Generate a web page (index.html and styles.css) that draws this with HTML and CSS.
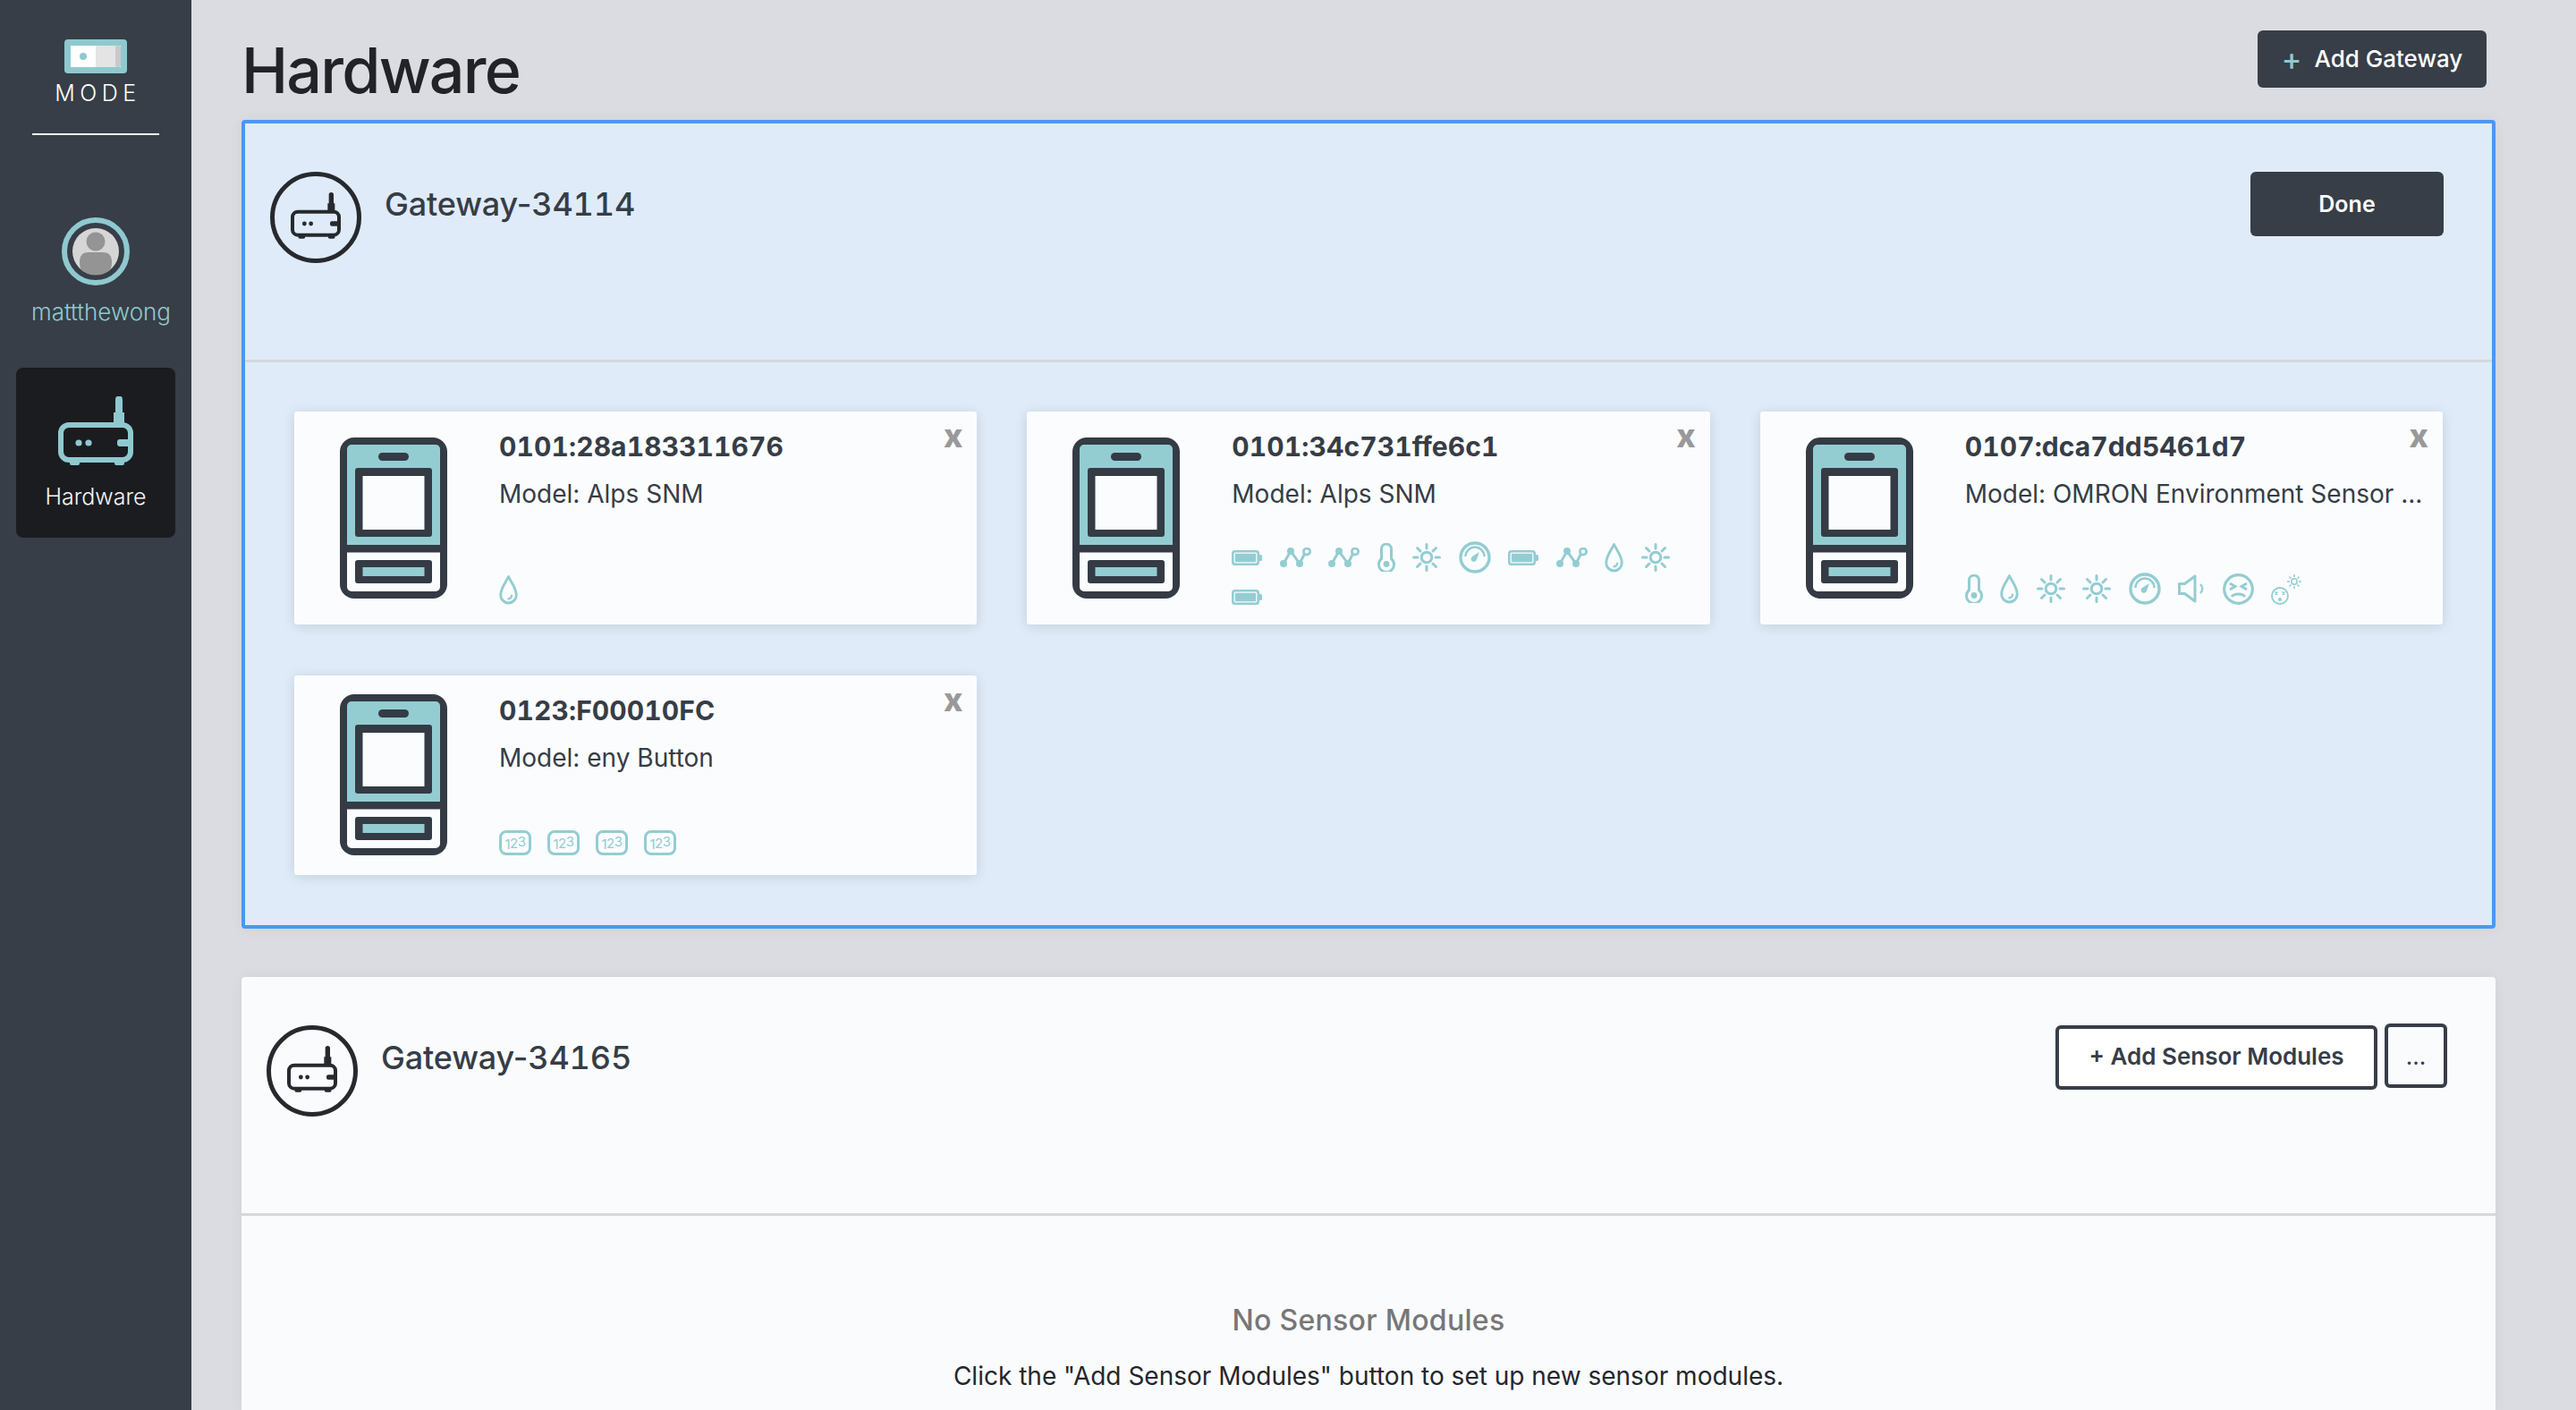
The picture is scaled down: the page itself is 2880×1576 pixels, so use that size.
FILE: index.html
```html
<!DOCTYPE html>
<html lang="en">
<head>
  <meta charset="UTF-8">
  <title>Hardware</title>
  <link rel="stylesheet" href="styles.css">
</head>
<body>
  <svg class="defs" width="0" height="0">
    <defs>
      <symbol id="i-router" viewBox="0 0 84 77">
        <rect x="3" y="32" width="78" height="39" rx="9" fill="none" stroke="currentColor" stroke-width="6"/>
        <path d="M64 3.500a4 4 0 0 1 8 0V18h2v14H62V18h2z" fill="currentColor"/>
        <rect x="13" y="70" width="11" height="7" rx="2" fill="currentColor"/>
        <rect x="63" y="70" width="11" height="7" rx="2" fill="currentColor"/>
        <circle cx="23" cy="52" r="3.600" fill="currentColor"/>
        <circle cx="34" cy="52" r="3.600" fill="currentColor"/>
        <rect x="66" y="48" width="16" height="8" rx="3" fill="currentColor"/>
      </symbol>
      <symbol id="i-device" viewBox="0 0 120 180">
        <rect width="120" height="180" rx="16" fill="#343b44"/>
        <path d="M13 8h94a5 5 0 0 1 5 5v107H8V13a5 5 0 0 1 5-5z" fill="#93cdd2"/>
        <path d="M8 128.500h104V167a5 5 0 0 1-5 5H13a5 5 0 0 1-5-5z" fill="#fbfcfd"/>
        <rect x="43" y="17" width="34" height="9" rx="4.500" fill="#343b44"/>
        <rect x="17" y="34" width="86" height="77" rx="3" fill="#343b44"/>
        <rect x="25.500" y="43" width="69" height="60" fill="#fbfcfd"/>
        <rect x="17" y="137" width="86" height="26" rx="3" fill="#343b44"/>
        <rect x="25.500" y="145" width="69" height="10" fill="#93cdd2"/>
      </symbol>
      <symbol id="i-battery" viewBox="0 0 34 17">
        <rect width="31" height="17" rx="3.500" fill="currentColor"/>
        <rect x="3.200" y="3.200" width="24.600" height="10.600" rx="1" fill="currentColor" stroke="#fbfcfd" stroke-width="1.300"/>
        <rect x="30" y="5" width="4" height="7" rx="1.500" fill="currentColor"/>
      </symbol>
      <symbol id="i-network" viewBox="0 0 35 22">
        <path d="M4 18L12 4l10 14 5.500-11" fill="none" stroke="currentColor" stroke-width="3"/>
        <circle cx="4" cy="18" r="4" fill="currentColor"/>
        <circle cx="12" cy="4" r="4" fill="currentColor"/>
        <circle cx="22" cy="18" r="4" fill="currentColor"/>
        <circle cx="30" cy="4.500" r="3.600" fill="none" stroke="currentColor" stroke-width="2.800"/>
      </symbol>
      <symbol id="i-thermo" viewBox="0 0 20 32">
        <path d="M4.500 17.500V6.500a5.500 5.500 0 0 1 11 0v11a8.500 8.500 0 1 1-11 0z" fill="none" stroke="currentColor" stroke-width="3"/>
        <circle cx="10" cy="23.500" r="3.400" fill="currentColor"/>
      </symbol>
      <symbol id="i-sun" viewBox="0 0 32 32">
        <circle cx="16" cy="16" r="5.800" fill="none" stroke="currentColor" stroke-width="3"/>
        <path d="M16 1.500v4.500M16 26v4.500M1.500 16H6M26 16h4.500M5.500 5.500L9 9M23 23l3.500 3.500M26.500 5.500L23 9M9 23l-3.500 3.500" fill="none" stroke="currentColor" stroke-width="3" stroke-linecap="round"/>
      </symbol>
      <symbol id="i-gauge" viewBox="0 0 36 36">
        <circle cx="18" cy="18" r="16" fill="none" stroke="currentColor" stroke-width="3.400"/>
        <path d="M7.500 17a10.500 10.500 0 0 1 21 0" fill="none" stroke="currentColor" stroke-width="2.400"/>
        <path d="M23 12l-3 8a3.200 3.200 0 1 1-5-3z" fill="currentColor"/>
      </symbol>
      <symbol id="i-drop" viewBox="0 0 20 32">
        <path d="M10 1.500C8 6.500 1.500 13.500 1.500 21.500a8.500 8.500 0 0 0 17 0C18.500 13.500 12 6.500 10 1.500z" fill="none" stroke="currentColor" stroke-width="2.800" stroke-linejoin="round"/>
        <path d="M13.500 21c0 3-2 4.500-4.500 4.500" fill="none" stroke="currentColor" stroke-width="2.200"/>
      </symbol>
      <symbol id="i-speaker" viewBox="0 0 30 32">
        <path d="M1.500 10.500h6L19 2v28L7.500 21.500h-6z" fill="none" stroke="currentColor" stroke-width="3" stroke-linejoin="round"/>
        <path d="M25 11c3 3 3 7 0 10" fill="none" stroke="currentColor" stroke-width="2.400"/>
      </symbol>
      <symbol id="i-angry" viewBox="0 0 35 35">
        <circle cx="17.500" cy="17.500" r="15.800" fill="none" stroke="currentColor" stroke-width="3.200"/>
        <path d="M8 11l6 3.500-6 3.500M27 11l-6 3.500 6 3.500M10 26c3-4 12-4 15 0" fill="none" stroke="currentColor" stroke-width="2.800"/>
      </symbol>
      <symbol id="i-dazed" viewBox="0 0 35 35">
        <circle cx="10" cy="25" r="9" fill="none" stroke="currentColor" stroke-width="1.800"/>
        <path d="M4.500 20.500l3 3M7.500 20.500l-3 3M12.500 20.500l3 3M15.500 20.500l-3 3" fill="none" stroke="currentColor" stroke-width="1.500"/>
        <circle cx="10" cy="29" r="2" fill="currentColor"/>
        <circle cx="26" cy="9" r="3.200" fill="none" stroke="currentColor" stroke-width="1.500"/>
        <path d="M26 1v3M26 14v3M18 9h3M31 9h3M20.500 3.500l2 2M29.500 12.500l2 2M31.500 3.500l-2 2M22.500 12.500l-2 2" fill="none" stroke="currentColor" stroke-width="1.500"/>
      </symbol>
    </defs>
  </svg>

  <div class="app">
    <nav class="sidebar">
      <div class="logo">
        <svg class="logo-mark" width="70" height="38" viewBox="0 0 70 38">
          <rect width="70" height="38" rx="4" fill="#8fc9cf"/>
          <rect x="7" y="7" width="56" height="24" fill="#fff"/>
          <rect x="35" y="7" width="28" height="24" rx="2" fill="#e4e4e4"/>
          <rect x="57" y="7" width="6" height="24" rx="2" fill="#c9c9c9"/>
          <circle cx="21" cy="19" r="4" fill="#8fc9cf"/>
        </svg>
        <div class="logo-text">MODE</div>
      </div>
      <div class="user">
        <svg width="76" height="80" viewBox="0 0 76 80">
          <circle cx="38" cy="40" r="35" fill="none" stroke="#8fc9cf" stroke-width="6"/>
          <circle cx="38" cy="40" r="26" fill="#d6d6d6"/>
          <circle cx="38" cy="29" r="10.500" fill="#949494"/>
          <path d="M20 52c0-8 4-11 10-11h16c6 0 10 3 10 11 0 4-1 7-2 9a26 26 0 0 1-32 0c-1-2-2-5-2-9z" fill="#949494"/>
        </svg>
        <div class="user-name">mattthewong</div>
      </div>
      <a class="nav-item">
        <svg class="nav-icon"><use href="#i-router"/></svg>
        <span>Hardware</span>
      </a>
    </nav>

    <main class="main">
      <header class="page-head">
        <h1>Hardware</h1>
        <button class="btn btn-add" type="button"><span class="plus">+</span>Add Gateway</button>
      </header>

      <section class="panel panel-active">
        <div class="panel-head">
          <div class="gw-icon"><svg><use href="#i-router"/></svg></div>
          <h2>Gateway-<span class="num">34114</span></h2>
          <button class="btn btn-done" type="button">Done</button>
        </div>
        <div class="cards">
          <article class="card">
            <svg class="device"><use href="#i-device"/></svg>
            <div class="card-body">
              <h3>0101:28a183311676</h3>
              <p>Model: Alps SNM</p>
              <div class="sensors">
                <svg class="s-drop"><use href="#i-drop"/></svg>
              </div>
            </div>
            <span class="card-close">x</span>
          </article>
          <article class="card">
            <svg class="device"><use href="#i-device"/></svg>
            <div class="card-body">
              <h3>0101:34c731ffe6c1</h3>
              <p>Model: Alps SNM</p>
              <div class="sensors">
                <svg class="s-battery"><use href="#i-battery"/></svg>
                <svg class="s-network"><use href="#i-network"/></svg>
                <svg class="s-network"><use href="#i-network"/></svg>
                <svg class="s-thermo"><use href="#i-thermo"/></svg>
                <svg class="s-sun"><use href="#i-sun"/></svg>
                <svg class="s-gauge"><use href="#i-gauge"/></svg>
                <svg class="s-battery"><use href="#i-battery"/></svg>
                <svg class="s-network"><use href="#i-network"/></svg>
                <svg class="s-drop"><use href="#i-drop"/></svg>
                <svg class="s-sun"><use href="#i-sun"/></svg>
                <svg class="s-battery"><use href="#i-battery"/></svg>
              </div>
            </div>
            <span class="card-close">x</span>
          </article>
          <article class="card">
            <svg class="device"><use href="#i-device"/></svg>
            <div class="card-body">
              <h3>0107:dca7dd5461d7</h3>
              <p>Model: OMRON Environment Sensor ...</p>
              <div class="sensors">
                <svg class="s-thermo"><use href="#i-thermo"/></svg>
                <svg class="s-drop"><use href="#i-drop"/></svg>
                <svg class="s-sun"><use href="#i-sun"/></svg>
                <svg class="s-sun"><use href="#i-sun"/></svg>
                <svg class="s-gauge"><use href="#i-gauge"/></svg>
                <svg class="s-speaker"><use href="#i-speaker"/></svg>
                <svg class="s-face"><use href="#i-angry"/></svg>
                <svg class="s-face"><use href="#i-dazed"/></svg>
              </div>
            </div>
            <span class="card-close">x</span>
          </article>
          <article class="card">
            <svg class="device"><use href="#i-device"/></svg>
            <div class="card-body">
              <h3>0123:F00010FC</h3>
              <p>Model: eny Button</p>
              <div class="sensors sensors-num">
                <span class="s-num">1<i>2</i><b>3</b></span>
                <span class="s-num">1<i>2</i><b>3</b></span>
                <span class="s-num">1<i>2</i><b>3</b></span>
                <span class="s-num">1<i>2</i><b>3</b></span>
              </div>
            </div>
            <span class="card-close">x</span>
          </article>
        </div>
      </section>

      <section class="panel panel-last">
        <div class="panel-head">
          <div class="gw-icon"><svg><use href="#i-router"/></svg></div>
          <h2>Gateway-<span class="num">34165</span></h2>
          <div class="head-actions">
            <button class="btn-outline btn-modules" type="button">+ Add Sensor Modules</button>
            <button class="btn-outline btn-more" type="button">...</button>
          </div>
        </div>
        <div class="empty">
          <h4>No Sensor Modules</h4>
          <p>Click the "Add Sensor Modules" button to set up new sensor modules.</p>
        </div>
      </section>
    </main>
  </div>
</body>
</html>
```

FILE: styles.css
```css
* {
  box-sizing: border-box;
}

html, body {
  height: 1576px;
  margin: 0;
  overflow: hidden;
}

body {
  font-family: Inter, "Liberation Sans", sans-serif;
  color: #363d46;
  background-color: #dbdce1;
}

.defs {
  position: absolute;
}

.app {
  display: flex;
  height: 1576px;
}

/* sidebar */
.sidebar {
  width: 214px;
  flex: none;
  background-color: #373e47;
  display: flex;
  flex-direction: column;
  align-items: center;
  padding-top: 44px;
}

.logo {
  width: 142px;
  height: 107px;
  border-bottom: 2px solid #f4f5f6;
  display: flex;
  flex-direction: column;
  align-items: center;
}

.logo-mark {
  display: block;
}

.logo-text {
  font-weight: 300;
  font-size: 25px;
  line-height: 30px;
  letter-spacing: 5.5px;
  margin-top: 7px;
  margin-left: 5px;
  color: #fff;
}

.user {
  margin-top: 90px;
  display: flex;
  flex-direction: column;
  align-items: center;
}

.user-name {
  font-weight: 300;
  font-size: 26px;
  line-height: 32px;
  color: #8fc9cf;
  margin-top: 12px;
  margin-left: 12px;
  white-space: nowrap;
}

.nav-item {
  width: 178px;
  height: 190px;
  margin-top: 46px;
  padding-top: 32px;
  background-color: #1b1c20;
  border-radius: 8px;
  display: flex;
  flex-direction: column;
  align-items: center;
  color: #8fc9cf;
}

.nav-icon {
  width: 84px;
  height: 77px;
}

.nav-item span {
  font-weight: 300;
  font-size: 25px;
  line-height: 32px;
  margin-top: 19px;
  color: #f4f5f6;
}

/* main */
.main {
  flex: 1;
  min-width: 0;
  padding: 0 90px 0 56px;
}

.page-head {
  height: 134px;
  display: flex;
  justify-content: space-between;
  align-items: flex-start;
}

h1 {
  margin: 37px 0 0;
  font-size: 70px;
  line-height: 84px;
  font-weight: 450;
  letter-spacing: -1.8px;
  color: #212326;
}

.btn {
  font-family: inherit;
  border: 0;
  border-radius: 6px;
  background-color: #373e47;
  color: #fff;
}

.btn-add {
  width: 256px;
  height: 64px;
  margin: 34px 10px 0 0;
  padding-bottom: 2px;
  font-size: 26px;
  font-weight: 500;
  display: flex;
  align-items: center;
  justify-content: center;
}

.plus {
  color: #8fc9cf;
  font-size: 34px;
  line-height: 34px;
  margin-right: 14px;
}

.panel {
  background-color: #fafbfd;
  border-radius: 4px;
  box-shadow: 0 0 16px rgba(0, 0, 0, 0.05);
  margin-bottom: 54px;
}

.panel-last {
  margin-bottom: 0;
  border-radius: 4px 4px 0 0;
}

.panel-active {
  background-color: #dfebf8;
  border: 4px solid #4a98f0;
}

.panel-head {
  height: 267px;
  padding: 54px 54px 0 28px;
  border-bottom: 3px solid #d5d8dc;
  display: flex;
  align-items: flex-start;
}

.gw-icon {
  width: 102px;
  height: 102px;
  border: 5px solid #26292e;
  border-radius: 50%;
  flex: none;
  display: flex;
  align-items: center;
  justify-content: center;
  color: #26292e;
}

.gw-icon svg {
  width: 56px;
  height: 52px;
  margin-bottom: 4px;
}

h2 {
  margin: 14px 0 0 26px;
  font-size: 36px;
  line-height: 44px;
  font-weight: 500;
  letter-spacing: -0.15px;
  flex: 1;
}

.num {
  font-variant-numeric: tabular-nums;
}

.btn-done {
  width: 216px;
  height: 72px;
  font-size: 25px;
  font-weight: 600;
}

.head-actions {
  display: flex;
  align-items: flex-start;
  gap: 8px;
}

.btn-outline {
  font-family: inherit;
  color: #363d46;
  border: 4px solid #373e47;
  border-radius: 6px;
  height: 72px;
  font-size: 26px;
  font-weight: 600;
}

.btn-modules {
  width: 360px;
  padding-bottom: 4px;
  background-color: #fff;
}

.btn-more {
  width: 70px;
  background-color: transparent;
  margin-top: -2px;
  font-weight: 400;
}

.cards {
  display: grid;
  grid-template-columns: repeat(3, 1fr);
  gap: 57px 56px;
  padding: 55px 55px 56px;
}

.card {
  position: relative;
  background-color: #fbfcfd;
  border-radius: 3px;
  box-shadow: 0 2px 14px rgba(0, 0, 0, 0.12);
  display: flex;
  align-items: center;
  padding: 21px 0 22px 51px;
}

.device {
  width: 120px;
  height: 180px;
  flex: none;
}

.card-body {
  align-self: stretch;
  margin: -2px 0 0 58px;
  padding-right: 20px;
  display: flex;
  flex-direction: column;
  min-width: 0;
  flex: 1;
}

h3 {
  margin: 0;
  font-size: 30px;
  line-height: 40px;
  font-weight: 700;
  letter-spacing: 0.1px;
  font-variant-numeric: tabular-nums;
}

.card-body p {
  margin: 13px 0 33px;
  font-size: 28px;
  line-height: 40px;
  white-space: nowrap;
}

.card-close {
  position: absolute;
  top: 8px;
  right: 16px;
  font-size: 36px;
  line-height: 38px;
  font-weight: 800;
  color: #999;
}

.sensors {
  margin-top: auto;
  display: flex;
  flex-wrap: wrap;
  align-items: center;
  gap: 18px 19.5px;
  color: #93cdd2;
}

.sensors-num {
  gap: 18px;
}

.sensors svg {
  display: block;
}

.s-battery { width: 34px; height: 17px; }
.s-network { width: 35px; height: 22px; }
.s-thermo { width: 20px; height: 32px; }
.s-sun { width: 32px; height: 32px; }
.s-gauge { width: 36px; height: 36px; }
.s-drop { width: 21px; height: 33px; }
.s-speaker { width: 30px; height: 32px; }
.s-face { width: 35px; height: 35px; }

.s-num {
  width: 36px;
  height: 28px;
  border: 3px solid #93cdd2;
  border-radius: 8px;
  font-size: 15px;
  line-height: 25px;
  letter-spacing: -0.5px;
  text-align: center;
  white-space: nowrap;
}

.s-num i {
  font-style: normal;
  position: relative;
  top: -1px;
}

.s-num b {
  font-weight: 400;
  position: relative;
  top: -3px;
}

.empty {
  text-align: center;
  padding: 95px 0 18px;
}

h4 {
  margin: 0;
  font-size: 32px;
  line-height: 44px;
  font-weight: 500;
  letter-spacing: 0.3px;
  color: #777;
}

.empty p {
  margin: 20px 0 0;
  font-size: 28px;
  line-height: 40px;
  color: #24272b;
}
```
